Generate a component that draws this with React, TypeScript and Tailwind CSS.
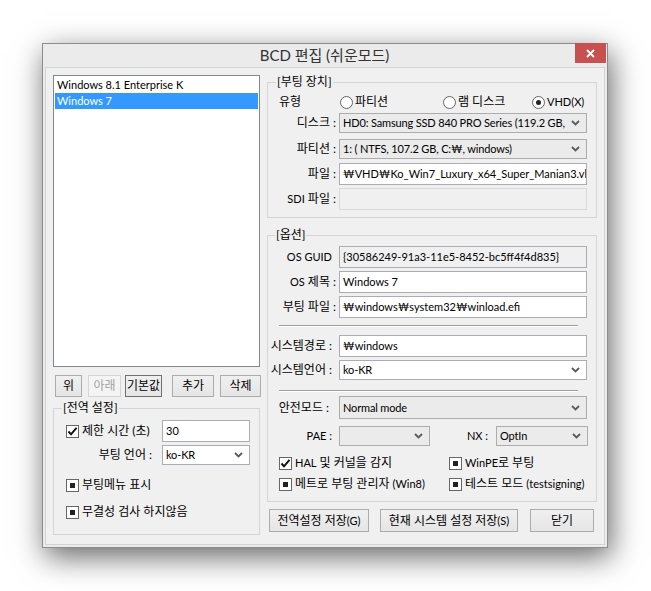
import React from "react";

const font = "font-['Lato','Noto_Sans_CJK_KR',sans-serif]";

// Latin runs are drawn a size smaller so they match the narrow UI font of the reference
function L({ children }: { children: React.ReactNode }) {
  return <span className="text-[11px]">{children}</span>;
}

function Chevron() {
  return (
    <svg width="9" height="6" viewBox="0 0 9 6" className="shrink-0">
      <path d="M1 1 L4.5 4.5 L8 1" fill="none" stroke="#5a5a5a" strokeWidth="1.8" />
    </svg>
  );
}

function TextBox({ value, className = "", gray = false, disabled = false }: { value?: string; className?: string; gray?: boolean; disabled?: boolean }) {
  return (
    <div
      className={`h-[22px] flex items-center pl-[3px] overflow-hidden whitespace-nowrap border text-[11px] ${
        disabled ? "bg-[#f0f0f0] border-[#d9d9d9]" : gray ? "bg-[#f0f0f0] border-[#abadb3]" : "bg-white border-[#abadb3]"
      } ${className}`}
    >
      {value}
    </div>
  );
}

function Combo({ value, className = "", edit = false, h = "h-[20px]" }: { value?: string; className?: string; edit?: boolean; h?: string }) {
  return (
    <div
      className={`${h} flex items-center pl-[3px] pr-[6px] border overflow-hidden whitespace-nowrap text-[11px] ${
        edit ? "bg-white border-[#abadb3]" : "bg-[#ebebeb] border-[#acacac]"
      } ${className}`}
    >
      <span className="flex-1 overflow-hidden mr-[2px] tracking-[-0.15px]">{value}</span>
      <Chevron />
    </div>
  );
}

function Check({ label, state, className = "" }: { label: React.ReactNode; state: "checked" | "mixed"; className?: string }) {
  return (
    <div className={`flex items-center h-[16px] whitespace-nowrap ${className}`}>
      <span className="w-[13px] h-[13px] border border-[#666] bg-white flex items-center justify-center shrink-0">
        {state === "checked" ? (
          <svg width="11" height="11" viewBox="0 0 11 11">
            <path d="M1.5 5.5 L4 8.3 L9.5 1.8" fill="none" stroke="#111" strokeWidth="2" />
          </svg>
        ) : (
          <span className="w-[5px] h-[5px] bg-[#222]" />
        )}
      </span>
      <span className="ml-[3px]">{label}</span>
    </div>
  );
}

function Radio({ label, on = false, className = "" }: { label: React.ReactNode; on?: boolean; className?: string }) {
  return (
    <div className={`flex items-center whitespace-nowrap ${className}`}>
      <span className="w-[13px] h-[13px] rounded-full border border-[#666] bg-white flex items-center justify-center shrink-0">
        {on && <span className="w-[5px] h-[5px] rounded-full bg-[#222]" />}
      </span>
      <span className="ml-[2px]">{label}</span>
    </div>
  );
}

function Btn({ children, className = "", disabled = false, dark = false }: { children: React.ReactNode; className?: string; disabled?: boolean; dark?: boolean }) {
  return (
    <button
      type="button"
      className={`flex items-center justify-center border whitespace-nowrap ${
        disabled
          ? "border-[#d5d5d5] bg-[#f4f4f4] text-[#a0a0a0]"
          : dark
          ? "border-[#707070] bg-gradient-to-b from-[#f0f0f0] to-[#e5e5e5]"
          : "border-[#acacac] bg-gradient-to-b from-[#f0f0f0] to-[#e5e5e5]"
      } ${className}`}
    >
      {children}
    </button>
  );
}

function Row({ label, children, className = "", pr = "pr-[3px]" }: { label: React.ReactNode; children: React.ReactNode; className?: string; pr?: string }) {
  return (
    <div className={`flex items-center ${className}`}>
      <span className={`w-[71px] text-right whitespace-nowrap ${pr}`}>{label}</span>
      {children}
    </div>
  );
}

function Sep() {
  return <div className="ml-[11px] w-[299px] h-[2px] border-t border-[#a0a0a0] border-b border-b-white" />;
}

export default function App() {
  return (
    <div className={`w-[651px] h-[591px] bg-white overflow-hidden text-[12px] leading-[16px] text-black ${font}`}>
      <div className="ml-[42px] mt-[43px] w-[566px] h-[505px] border border-[#8c8c8c] bg-[#ebebeb] flex flex-col shadow-[3px_9px_28px_rgba(0,0,0,0.6)]">
        {/* Title bar */}
        <div className="h-[23px] flex items-start">
          <div className="w-[31px]" />
          <div className="flex-1 text-center text-[15px] leading-[23px] text-[#333]">BCD 편집 (쉬운모드)</div>
          <div className="w-[31px] h-[20px] mr-[1px] -mt-[1px] bg-[#c75050] flex items-center justify-center">
            <svg width="9" height="9" viewBox="0 0 9 9">
              <path d="M1 1 L8 8 M8 1 L1 8" stroke="white" strokeWidth="1.8" />
            </svg>
          </div>
        </div>

        {/* Client area */}
        <div className="flex-1 mx-[2px] mb-[2px] border border-[#d4d4d4] bg-[#f0f0f0] flex items-start pl-[7px] pt-[7px]">
          {/* Left column */}
          <div className="w-[208px] flex flex-col">
            <div className="w-[207px] h-[292px] border border-[#828790] bg-white p-[1px] text-[11px]">
              <div className="h-[16px] pl-[2px] flex items-center whitespace-nowrap">Windows 8.1 Enterprise K</div>
              <div className="h-[16px] pl-[2px] flex items-center bg-[#3399ff] text-white">Windows 7</div>
            </div>
            <div className="flex mt-[8px] h-[22px]">
              <Btn className="ml-[2px] w-[27px]">위</Btn>
              <Btn className="ml-[6px] w-[33px]" disabled>아래</Btn>
              <Btn className="ml-[4px] w-[37px]" dark>기본값</Btn>
              <Btn className="ml-[10px] w-[42px]">추가</Btn>
              <Btn className="ml-[6px] w-[41px]">삭제</Btn>
            </div>
            <fieldset className="mt-[4px] w-[207px] h-[134px] border border-[#d5d5d5] px-0">
              <legend className="ml-[8px] px-[1px] leading-[14px]">[전역 설정]</legend>
              <div className="flex items-center mt-[5px]">
                <div className="w-[108px] pl-[12px]">
                  <Check label="제한 시간 (초)" state="checked" />
                </div>
                <TextBox value="30" className="w-[88px]" />
              </div>
              <div className="flex items-center mt-[3px]">
                <span className="w-[108px] text-right pr-[10px]">부팅 언어 :</span>
                <Combo value="ko-KR" edit className="w-[88px]" />
              </div>
              <Check label="부팅메뉴 표시" state="mixed" className="ml-[12px] mt-[12px]" />
              <Check label="무결성 검사 하지않음" state="mixed" className="ml-[12px] mt-[11px]" />
            </fieldset>
          </div>

          {/* Right column */}
          <div className="ml-[6px] w-[330px] flex flex-col">
            <fieldset className="w-[330px] h-[143px] border border-[#d5d5d5] px-0">
              <legend className="ml-[8px] px-[1px] leading-[14px]">[부팅 장치]</legend>
              <div className="flex items-center h-[16px] mt-[5px]">
                <span className="ml-[11px] w-[61px]">유형</span>
                <Radio label="파티션" className="w-[103px]" />
                <Radio label="램 디스크" className="w-[89px]" />
                <Radio label={<L>VHD(X)</L>} on />
              </div>
              <Row label="디스크 :" className="mt-[3px]">
                <Combo value="HD0: Samsung SSD 840 PRO Series (119.2 GB," className="w-[248px]" />
              </Row>
              <Row label="파티션 :" className="mt-[6px]">
                <Combo value="1: ( NTFS, 107.2 GB, C:₩, windows)" className="w-[248px]" />
              </Row>
              <Row label="파일 :" className="mt-[4px]">
                <TextBox value="₩VHD₩Ko_Win7_Luxury_x64_Super_Manian3.vhd" className="w-[248px]" />
              </Row>
              <Row label={<><L>SDI</L> 파일 :</>} className="mt-[3px]">
                <TextBox disabled className="w-[248px]" />
              </Row>
            </fieldset>

            <fieldset className="mt-[10px] w-[330px] h-[274px] border border-[#d5d5d5] px-0">
              <legend className="ml-[7px] px-[1px] leading-[14px]">[옵션]</legend>
              <Row label={<L>OS GUID</L>} className="mt-[4px]" pr="pr-[7px]">
                <TextBox gray value="{30586249-91a3-11e5-8452-bc5ff4f4d835}" className="w-[248px]" />
              </Row>
              <Row label={<><L>OS</L> 제목 :</>} className="mt-[3px]">
                <TextBox value="Windows 7" className="w-[248px]" />
              </Row>
              <Row label="부팅 파일 :" className="mt-[3px]">
                <TextBox value="₩windows₩system32₩winload.efi" className="w-[248px]" />
              </Row>
              <div className="mt-[7px]">
                <Sep />
              </div>
              <Row label="시스템경로 :" className="mt-[8px]" pr="pr-[7px]">
                <TextBox value="₩windows" className="w-[248px]" />
              </Row>
              <Row label="시스템언어 :" className="mt-[3px]" pr="pr-[7px]">
                <Combo value="ko-KR" edit className="w-[248px]" />
              </Row>
              <div className="mt-[10px]">
                <Sep />
              </div>
              <Row label="안전모드 :" className="mt-[4px]" pr="pr-[10px]">
                <Combo value="Normal mode" className="w-[248px]" h="h-[23px]" />
              </Row>
              <div className="flex items-center mt-[7px]">
                <span className="w-[71px] text-right pr-[7px]"><L>PAE :</L></span>
                <Combo className="w-[91px]" />
                <span className="w-[66px] text-right pr-[8px]"><L>NX :</L></span>
                <Combo value="OptIn" className="w-[92px]" />
              </div>
              <div className="flex mt-[9px]">
                <Check label={<><L>HAL</L> 및 커널을 감지</>} state="checked" className="ml-[11px] w-[170px]" />
                <Check label={<><L>WinPE</L>로 부팅</>} state="mixed" />
              </div>
              <div className="flex mt-[5px]">
                <Check label={<>메트로 부팅 관리자 <L>(Win8)</L></>} state="mixed" className="ml-[11px] w-[170px]" />
                <Check label={<>테스트 모드 <L>(testsigning)</L></>} state="mixed" />
              </div>
            </fieldset>

            <div className="flex mt-[7px] h-[23px]">
              <Btn className="ml-[2px] w-[100px]">전역설정 저장<L>(G)</L></Btn>
              <Btn className="ml-[11px] w-[138px]">현재 시스템 설정 저장<L>(S)</L></Btn>
              <Btn className="ml-[12px] w-[64px]">닫기</Btn>
            </div>
          </div>
        </div>
      </div>
    </div>
  );
}
